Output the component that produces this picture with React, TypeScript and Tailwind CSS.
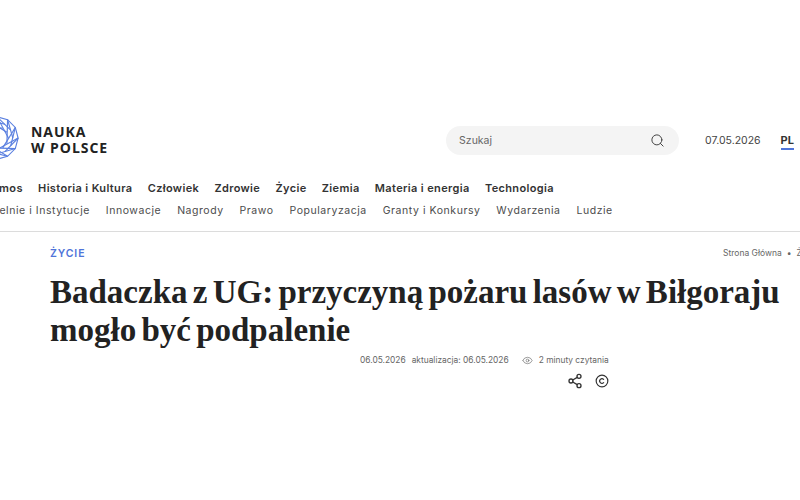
import {Copyright, Eye, Search, Share2} from "lucide-react";

const mainNav = ["Kosmos", "Historia i Kultura", "Człowiek", "Zdrowie", "Życie", "Ziemia", "Materia i energia", "Technologia"];
const subNav = ["Uczelnie i Instytucje", "Innowacje", "Nagrody", "Prawo", "Popularyzacja", "Granty i Konkursy", "Wydarzenia", "Ludzie"];

function Logo() {
  const rings = [0, 1, 2, 3, 4, 5, 6, 7, 8, 9, 10, 11];
  const outer = rings.map((i) => {
    const a = (i * Math.PI) / 6;
    return `${25 + 24 * Math.cos(a)},${25 + 24 * Math.sin(a)}`;
  });
  return (
    <svg width="44" height="44" viewBox="0 0 50 50" fill="none" stroke="#5b80e0" strokeWidth="1.3" className="shrink-0">
      <polygon points={outer.join(" ")} />
      {rings.map((i) => {
        const a = (i * Math.PI) / 6;
        const b = ((i + 3) * Math.PI) / 6;
        const c = ((i + 2) * Math.PI) / 6;
        return (
          <g key={i}>
            <line x1={25 + 24 * Math.cos(a)} y1={25 + 24 * Math.sin(a)} x2={25 + 13 * Math.cos(b)} y2={25 + 13 * Math.sin(b)} />
            <line x1={25 + 24 * Math.cos(a)} y1={25 + 24 * Math.sin(a)} x2={25 + 18 * Math.cos(c)} y2={25 + 18 * Math.sin(c)} />
          </g>
        );
      })}
    </svg>
  );
}

export default function App() {
  return (
    <div className="h-[500px] w-[800px] overflow-hidden bg-white font-['Inter',sans-serif] text-[#2b2b2b]">
      <header className="flex h-[177px] items-start pt-[116px]">
        <div className="-ml-[25px] flex items-center">
          <Logo />
          <div className="ml-[12px] mt-[3px] whitespace-nowrap font-['Open_Sans',sans-serif] text-[14px] font-bold leading-[16px] tracking-[0.95px] text-[#222]">
            <div>NAUKA</div>
            <div>W POLSCE</div>
          </div>
        </div>
        <div className="ml-[338px] mt-[10px] flex h-[29px] w-[233px] items-center justify-between rounded-full bg-[#f4f4f4] pl-[13px] pr-[14px]">
          <span className="text-[10.5px] text-[#666]">Szukaj</span>
          <Search size={15} strokeWidth={1.6} className="text-[#444]" />
        </div>
        <span className="ml-[26px] mt-[18px] text-[10.5px] leading-[14px] text-[#444]">07.05.2026</span>
        <span className="ml-[20px] mt-[17px] border-b-2 border-[#4f74d9] pb-[1px] text-[11px] font-bold leading-[14px] text-[#333]">PL</span>
      </header>
      <nav className="-ml-[22px] flex h-[22px] items-center gap-[15.3px] whitespace-nowrap text-[11px] font-semibold tracking-[0.35px] text-[#333]">
        {mainNav.map((item) => (
          <a key={item}>{item}</a>
        ))}
      </nav>
      <nav className="-ml-[21.5px] mt-[1px] flex h-[22px] items-center gap-[15.9px] whitespace-nowrap text-[10.5px] tracking-[0.55px] text-[#4c4c4c]">
        {subNav.map((item) => (
          <a key={item}>{item}</a>
        ))}
      </nav>
      <div className="mt-[9px] flex h-[44px] items-center whitespace-nowrap border-t border-[#dcdcdc] pl-[50px]">
        <span className="w-[673px] shrink-0 text-[10.5px] font-semibold tracking-[0.9px] text-[#4f74d9]">ŻYCIE</span>
        <span className="text-[8.5px] text-[#666]">
          Strona Główna<span className="mx-[5px]">•</span>Życie
        </span>
      </div>
      <h1 className="-mt-[2px] whitespace-nowrap pl-[50px] font-['Liberation_Serif',serif] text-[33px] font-bold leading-[38px] text-[#222] [word-spacing:-3px]">
        Badaczka z UG: przyczyną pożaru lasów w Biłgoraju
        <br />
        mogło być podpalenie
      </h1>
      <div className="mt-[4px] flex h-[14px] items-center whitespace-nowrap pl-[360px] text-[8.4px] text-[#666]">
        <span>06.05.2026</span>
        <span className="ml-[6px]">aktualizacja: 06.05.2026</span>
        <Eye size={11} strokeWidth={1.4} className="ml-[13px]" />
        <span className="ml-[6px]">2 minuty czytania</span>
      </div>
      <div className="mt-[6px] flex items-center gap-[12px] pl-[567px] text-[#333]">
        <Share2 size={16} strokeWidth={2} />
        <Copyright size={14} strokeWidth={2} />
      </div>
    </div>
  );
}
